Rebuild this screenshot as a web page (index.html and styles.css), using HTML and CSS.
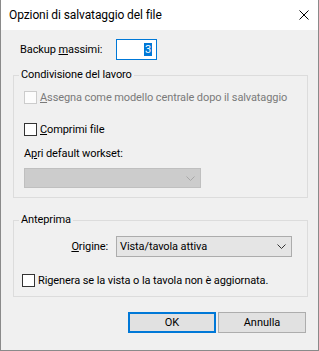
FILE: index.html
```html
<!DOCTYPE html>
<html lang="it">
<head>
<meta charset="utf-8">
<title>Opzioni di salvataggio del file</title>
<link rel="stylesheet" href="styles.css">
</head>
<body>
<div class="window">
  <div class="titlebar">
    <span class="title">Opzioni di salvataggio del file</span>
    <svg class="close" width="10" height="10" viewBox="0 0 10 10"><path d="M0.5 0.5 L9.5 9.5 M9.5 0.5 L0.5 9.5" stroke="#000" stroke-width="1" fill="none"/></svg>
  </div>
  <div class="content">
    <div class="backup-row">
      <span class="backup-label">Backup <u>m</u>assimi:</span>
      <div class="spin"><span class="sel">3</span></div>
    </div>
    <fieldset class="group g1">
      <legend>Condivisione del lavoro</legend>
      <div class="check disabled c1"><span class="box"></span><span class="check-text"><u>A</u>ssegna come modello centrale dopo il salvataggio</span></div>
      <div class="check c2"><span class="box"></span><span class="check-text"><u>C</u>omprimi file</span></div>
      <div class="field-label">A<u>p</u>ri default workset:</div>
      <div class="select select-disabled">
        <svg class="chev" width="9" height="5" viewBox="0 0 9 5"><path d="M0.5 0.5 L4.5 4.5 L8.5 0.5" stroke="#a8a8a8" stroke-width="1" fill="none"/></svg>
      </div>
    </fieldset>
    <fieldset class="group g2">
      <legend>Anteprima</legend>
      <div class="origin-row">
        <span class="origin-label"><u>O</u>rigine:</span>
        <div class="select select-enabled">
          <span class="select-text">Vista/tavola attiva</span>
          <svg class="chev" width="9" height="5" viewBox="0 0 9 5"><path d="M0.5 0.5 L4.5 4.5 L8.5 0.5" stroke="#333" stroke-width="1" fill="none"/></svg>
        </div>
      </div>
      <div class="check c3"><span class="box"></span><span class="check-text">Rigenera se la vista o la tavola non è aggiornata.</span></div>
    </fieldset>
    <div class="buttons">
      <button class="btn btn-default">OK</button>
      <button class="btn">Annulla</button>
    </div>
  </div>
</div>
</body>
</html>
```

FILE: styles.css
```css
* { box-sizing: border-box; }
html, body { margin: 0; padding: 0; background: #f0f0f0; }
body {
  font-family: Roboto, "Liberation Sans", sans-serif;
  font-size: 11px;
  letter-spacing: -0.1px;
  color: #000;
}
u { text-decoration: underline; text-underline-offset: 1px; }

.window {
  width: 319px;
  height: 351px;
  border: 1px solid #8a8a8a;
  border-top: none;
  background: #f0f0f0;
  display: flex;
  flex-direction: column;
}

.titlebar {
  height: 30px;
  background: #fff;
  display: flex;
  align-items: center;
  padding-left: 8px;
  flex: none;
}
.title { font-size: 12px; letter-spacing: -0.1px; line-height: 16px; }
.close { margin-left: auto; margin-right: 9px; display: block; }

.content { padding: 9px 10px 0 12px; }

.backup-row { display: flex; align-items: center; height: 21px; }
.backup-label { width: 103px; padding-left: 7px; line-height: 16px; }
.spin {
  width: 41px; height: 21px;
  background: #fff;
  border: 1px solid #0078d7;
  display: flex; align-items: center; justify-content: flex-end;
  padding-right: 4px;
}
.sel { background: #0078d7; color: #fff; line-height: 13px; padding: 0 1px; }

.group {
  margin: 0;
  padding: 0 0 9px 0;
  border: 1px solid #dcdcdc;
  min-width: 0;
}
.group legend {
  margin-left: 5px;
  padding: 0 2px;
  line-height: 14px;
}
.g1 { margin-top: 8px; }
.g2 { margin-top: 15px; }

.check { display: flex; align-items: center; height: 13px; }
.box {
  width: 13px; height: 13px;
  border: 1px solid #333;
  background: #fff;
  flex: none;
}
.check-text { margin-left: 3px; line-height: 14px; white-space: nowrap; }
.check.disabled .box { border-color: #cccccc; background: #fcfcfc; }
.check.disabled .check-text { color: #7a7a7a; }
.c1 { margin: 9px 0 0 10px; }
.c2 { margin: 19px 0 0 10px; }
.c3 { margin: 17px 0 0 8px; }

.field-label { margin: 10px 0 0 10px; line-height: 16px; }

.select {
  height: 21px;
  display: flex; align-items: center;
  padding: 0 5px 0 3px;
}
.select .chev { margin-left: auto; display: block; }
.select-disabled {
  margin: 6px 0 0 10px;
  width: 177px; height: 20px;
  background: #cccccc;
  border: 1px solid #bfbfbf;
}
.select-enabled {
  width: 176px;
  background: #e5e5e5;
  border: 1px solid #acacac;
}

.origin-row { display: flex; align-items: center; margin-top: 9px; }
.origin-label { width: 94px; text-align: right; margin-right: 8px; line-height: 16px; }

.buttons {
  display: flex; justify-content: flex-end; gap: 2px;
  margin: 15px 2px 0 0;
}
.btn {
  width: 88px; height: 21px;
  background: #e1e1e1;
  border: 1px solid #adadad;
  font: inherit;
  color: #000;
  padding: 0;
}
.btn-default { border: 2px solid #0078d7; }
```
